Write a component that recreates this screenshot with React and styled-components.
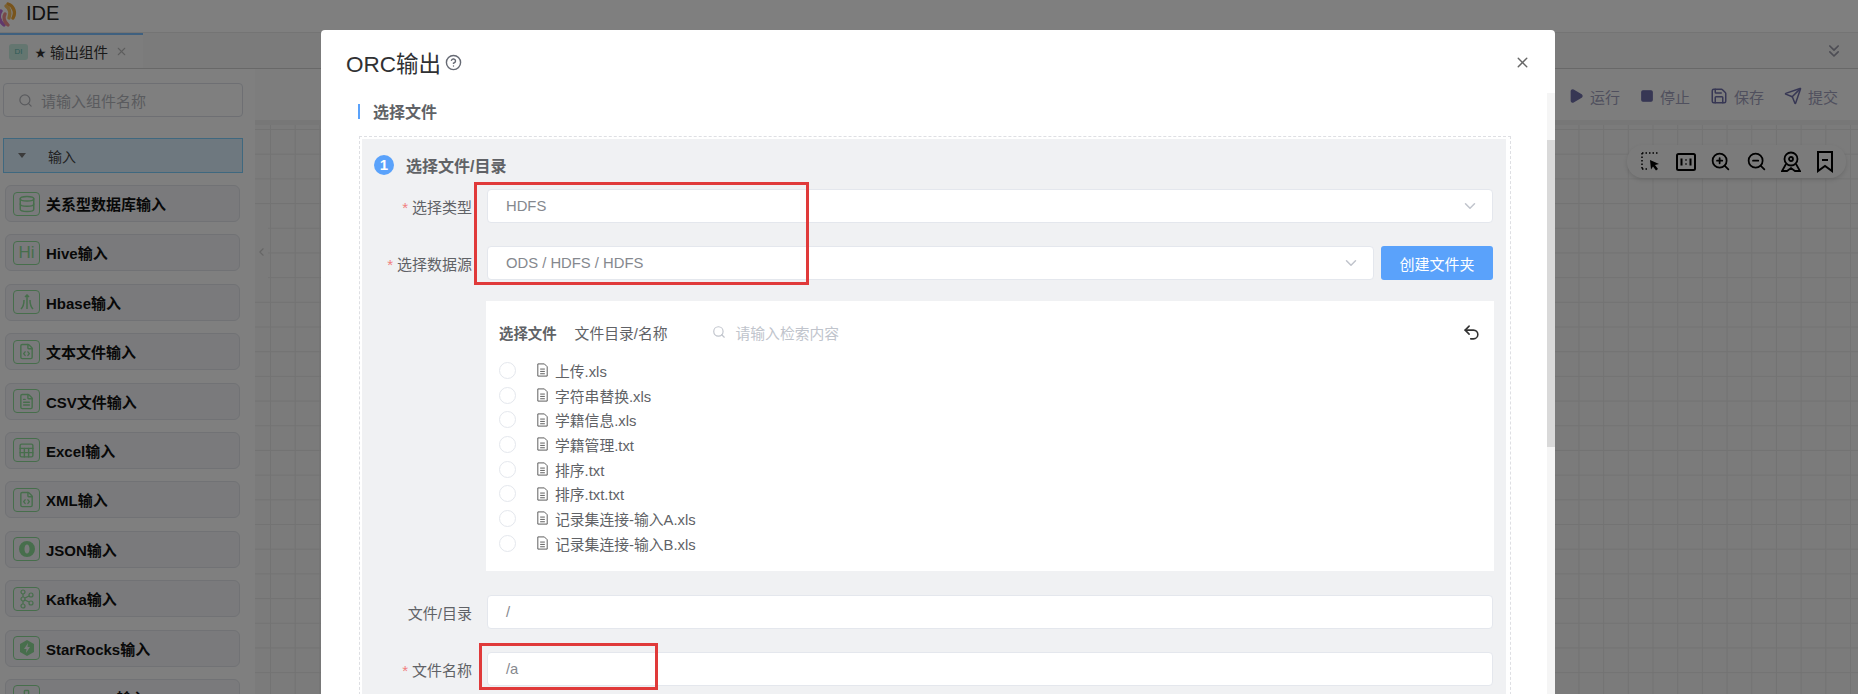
import React from "react";
import styled, { createGlobalStyle } from "styled-components";
import { Search, X, ChevronDown, ChevronLeft, ChevronsDown, FileText, Undo2, CircleHelp, Play, Square, Save, Send, ZoomIn, ZoomOut, Database, Network, FileCode, Sheet } from "lucide-react";

const Global = createGlobalStyle`
  html, body { margin: 0; padding: 0; overflow: hidden; }
  body { font-family: "Liberation Sans", "Noto Sans CJK SC", sans-serif; }
  * { box-sizing: border-box; }
`;

const Page = styled.div`
  position: relative;
  width: 1858px;
  height: 694px;
  overflow: hidden;
  background: #fff;
  display: flex;
  flex-direction: column;
`;

const TopBar = styled.header`
  height: 33px;
  flex: none;
  display: flex;
  align-items: center;
  gap: 9px;
  padding-bottom: 5px;
  font-size: 20px;
  color: #222;
  border-bottom: 1px solid #e8e8e8;
  svg { margin: 3px 0 0 -3px; }
`;

const TabBar = styled.div`
  height: 36px;
  flex: none;
  display: flex;
  justify-content: space-between;
  align-items: center;
  background: #f7f7f7;
  border-bottom: 1px solid #d0d0d0;
  padding-right: 14px;
  color: #9a9aa8;
`;

const Tab = styled.div`
  width: 143px;
  height: 100%;
  display: flex;
  align-items: center;
  padding-left: 9px;
  font-size: 14.5px;
  color: #333;
  border-top: 2px solid #7ec0ff;
  background: #fafafa;
  svg { color: #bbb; margin-left: 7px; }
`;

const TabBadge = styled.span`
  width: 19px;
  height: 16px;
  border-radius: 3px;
  background: #c8ece0;
  color: #60b8b0;
  font-size: 8px;
  line-height: 16px;
  text-align: center;
  margin-right: 7px;
`;

const Star = styled.span`
  font-size: 11px;
  margin-right: 4px;
`;

const Main = styled.div`
  flex: 1;
  min-height: 0;
  display: flex;
`;

const Sidebar = styled.aside`
  width: 255px;
  flex: none;
  padding: 14px 12px 0 3px;
  overflow: hidden;
`;

const SideSearch = styled.div`
  height: 34px;
  display: flex;
  align-items: center;
  gap: 8px;
  padding-left: 14px;
  border: 1px solid #dcdfe6;
  border-radius: 4px;
  font-size: 15px;
  color: #b4b6bc;
`;

const Group = styled.div`
  height: 35px;
  margin: 21px 0 12px;
  display: flex;
  align-items: center;
  padding-left: 14px;
  gap: 22px;
  font-size: 14px;
  color: #444;
  background: #dcf0ff;
  border: 1px solid #7ed0ff;
`;

const Caret = styled.span`
  width: 0;
  height: 0;
  border-left: 4px solid transparent;
  border-right: 4px solid transparent;
  border-top: 5px solid #777;
`;

const Items = styled.div`
  display: flex;
  flex-direction: column;
  gap: 12.4px;
  margin: 0 3px 0 2px;
`;

const Item = styled.div`
  height: 37px;
  flex: none;
  display: flex;
  align-items: center;
  gap: 6px;
  padding-left: 7px;
  font-size: 15px;
  font-weight: 700;
  color: #111;
  background: #f4f5f8;
  border: 1px solid #e2e4ea;
  border-radius: 6px;
`;

const ItemIcon = styled.span`
  width: 27px;
  height: 24px;
  flex: none;
  display: flex;
  align-items: center;
  justify-content: center;
  border: 1px solid #8edc98;
  border-radius: 4px;
  color: #8edc98;
  font-size: 17px;
  font-weight: 400;
`;

const Workspace = styled.section`
  position: relative;
  flex: 1;
  min-width: 0;
  display: flex;
  flex-direction: column;
`;

const Toolbar = styled.div`
  height: 51px;
  flex: none;
  display: flex;
  align-items: center;
  justify-content: flex-end;
  gap: 20px;
  padding: 3px 20px 0 0;
  background: #fafafa;
`;

const ToolAction = styled.span`
  display: flex;
  align-items: center;
  gap: 6px;
  font-size: 15px;
  color: #a0a0bc;
  svg { color: #6e6ea8; }
`;

const Canvas = styled.div`
  flex: 1;
  background-color: #f6f6f6;
  background-image:
    linear-gradient(#e6e6e6 1px, transparent 1px),
    linear-gradient(90deg, #e6e6e6 1px, transparent 1px);
  background-size: 24.7px 24.7px;
  background-position: 15px 4px;
  border-top: 5px solid #eee;
`;

const CollapseHandle = styled.span`
  position: absolute;
  left: 0;
  top: 148px;
  width: 13px;
  height: 70px;
  display: flex;
  align-items: center;
  color: #ccc;
  background: #f6f6f6;
`;

const CanvasTools = styled.div`
  position: absolute;
  right: 12px;
  top: 76px;
  width: 219px;
  height: 33px;
  display: flex;
  align-items: center;
  justify-content: space-between;
  padding: 0 12px 0 14px;
  border-radius: 16px;
  background: #f7f7f7;
  box-shadow: 0 2px 4px rgba(0, 0, 0, 0.12);
  color: #000;
`;

const Overlay = styled.div`
  position: absolute;
  inset: 0;
  background: rgba(0, 0, 0, 0.5);
`;

const Modal = styled.div`
  position: absolute;
  left: 321px;
  top: 30px;
  width: 1234px;
  height: 720px;
  background: #fff;
  border-radius: 4px;
`;

const ModalHeader = styled.div`
  height: 61px;
  display: flex;
  align-items: center;
  padding: 3px 25px 0;
  font-size: 22.5px;
  color: #303133;
  svg { color: #666a74; margin-left: 4px; }
`;

const CloseButton = styled.span`
  margin-left: auto;
  margin-right: -1px;
  display: flex;
  svg { color: #666; margin: 0; }
`;

const ScrollTrack = styled.div`
  position: absolute;
  right: 0;
  top: 63px;
  bottom: 0;
  width: 8px;
  padding-top: 47px;
  background: #f5f5f5;
`;

const ScrollThumb = styled.div`
  height: 307px;
  background: #d9d9d9;
`;

const ModalBody = styled.div`
  padding: 10px 44px 0 38px;
`;

const SectionTitle = styled.h3`
  height: 20px;
  margin: 0 0 15px -1px;
  display: flex;
  align-items: center;
  gap: 13px;
  font-size: 16px;
  color: #606266;
  &::before {
    content: "";
    width: 2px;
    height: 15px;
    background: #5aa2fb;
  }
`;

const DashedBox = styled.div`
  border: 1px dashed #dedfe3;
  padding: 2px 4px 0 2px;
`;

const StepPanel = styled.div`
  background: #f0f1f3;
  padding: 16px 13px 20px 0;
`;

const StepTitle = styled.div`
  height: 20px;
  margin: 0 0 14px 12px;
  display: flex;
  align-items: center;
  gap: 12px;
  font-size: 16px;
  font-weight: 700;
  color: #606266;
`;

const StepNumber = styled.span`
  width: 20px;
  height: 20px;
  border-radius: 50%;
  background: #5aa2fb;
  color: #fff;
  font-size: 15px;
  line-height: 20px;
  text-align: center;
`;

const FormRow = styled.div`
  display: flex;
  align-items: center;
  margin-bottom: ${(p) => p.$gap ?? 23}px;
`;

const Label = styled.label`
  width: 110px;
  flex: none;
  margin-right: 15px;
  text-align: right;
  font-size: 15px;
  color: #606266;
  ${(p) => p.$required && `&::before { content: "*"; color: #f08080; margin-right: 4px; }`}
`;

const Field = styled.div`
  flex: 1;
  min-width: 0;
  height: 34px;
  display: flex;
  align-items: center;
  justify-content: space-between;
  padding: 0 13px 0 18px;
  background: #fff;
  border: 1px solid #e4e7ed;
  border-radius: 4px;
  font-size: 14.8px;
  color: #85888e;
  svg { color: #c0c4cc; }
`;

const PrimaryButton = styled.button`
  width: 112px;
  height: 34px;
  flex: none;
  margin-left: 7px;
  border: 0;
  border-radius: 3px;
  background: #5aa2fb;
  color: #fff;
  font: inherit;
  font-size: 15px;
`;

const FilePanel = styled.div`
  height: 270px;
  margin: 0 -1px 24px 124px;
  padding: 21px 10px 0 13px;
  background: #fff;
`;

const FileHead = styled.div`
  height: 20px;
  margin-bottom: 16px;
  display: flex;
  align-items: center;
  font-size: 14.8px;
  color: #606266;
`;

const FileHeadTitle = styled.b`
  font-size: 14.4px;
  margin-right: 18px;
`;

const FileSearch = styled.span`
  margin-left: 45px;
  display: flex;
  align-items: center;
  gap: 9px;
  color: #c0c4cc;
`;

const BackIcon = styled.span`
  margin-left: auto;
  margin-right: 3px;
  display: flex;
  color: #333;
`;

const FileRow = styled.div`
  height: 24.7px;
  display: flex;
  align-items: center;
  font-size: 14.8px;
  color: #606266;
  svg { margin: 0 5px 0 19px; color: #555; }
`;

const Radio = styled.span`
  width: 17px;
  height: 17px;
  flex: none;
  border: 1px solid #e4e7ed;
  border-radius: 50%;
`;

const RedMark = styled.div`
  position: absolute;
  left: ${(p) => p.$x}px;
  top: ${(p) => p.$y}px;
  width: ${(p) => p.$w}px;
  height: ${(p) => p.$h}px;
  border: 3px solid #e03a3a;
`;

const Logo = () => (
  <svg width="20" height="26" viewBox="0 0 20 26" fill="none" strokeWidth="3.4" strokeLinecap="round">
    <path d="M11 2c6 2 8 9 5 14" stroke="#f0a838" />
    <path d="M9 4c3 2 5 6 3 12" stroke="#f7c060" />
    <path d="M4 9c-3 4-2 10 3 14" stroke="#c070d8" />
    <path d="M8 12c-2 3-1 8 3 11" stroke="#f09090" />
  </svg>
);

const Doc = ({ children }) => (
  <svg width="15" height="16" viewBox="0 0 16 16" fill="none" stroke="currentColor" strokeWidth="1">
    <path d="M3 1.500h7l3 3v10H3z" />
    {children}
  </svg>
);

const SelectTool = () => (
  <svg width="20" height="20" viewBox="0 0 20 20" fill="none">
    <path d="M1 1h16M1 1v16M1 17h5" stroke="#000" strokeWidth="1.500" strokeDasharray="1.500 2" />
    <path d="M9 8l9 4-4 1 3 4-2 1.500-3-4-2 3z" fill="#000" />
  </svg>
);

const RatioTool = () => (
  <svg width="20" height="18" viewBox="0 0 20 18" fill="none" stroke="#000" strokeWidth="2">
    <rect x="1" y="1" width="18" height="16" rx="1.500" />
    <path d="M5.500 5.500v7M14.500 5.500v7M10 6.500v1M10 10.500v1" />
  </svg>
);

const BadgeTool = () => (
  <svg width="20" height="22" viewBox="0 0 20 22" fill="none" stroke="#000" strokeWidth="1.800">
    <circle cx="10" cy="8" r="6.500" />
    <circle cx="10" cy="8" r="2" />
    <path d="M5 13l-4 7h5l4-3 4 3h5l-4-7" />
  </svg>
);

const BookmarkTool = () => (
  <svg width="18" height="22" viewBox="0 0 18 22" fill="none" stroke="#000" strokeWidth="2">
    <path d="M2 1h14v19l-7-5-7 5zM6 9h6" />
  </svg>
);

const JsonIcon = () => (
  <svg width="18" height="18" viewBox="0 0 18 18">
    <path fillRule="evenodd" d="M9 1a8 8 0 1 1 0 16A8 8 0 0 1 9 1zm0 3.500c-1.500 0-2.500 2-2.500 4.500s1 4.500 2.500 4.500 2.500-2 2.500-4.500-1-4.500-2.500-4.500z" fill="currentColor" />
  </svg>
);

const StarRocksIcon = () => (
  <svg width="18" height="18" viewBox="0 0 18 18">
    <path fillRule="evenodd" d="M9 1l7 4v8l-7 4-7-4V5zm1 3L6 10h2.500L8 14l4-6H9.500z" fill="currentColor" />
  </svg>
);

const KafkaIcon = () => (
  <svg width="16" height="20" viewBox="0 0 16 20" fill="none" stroke="currentColor" strokeWidth="1.200">
    <circle cx="4" cy="3" r="2" /><circle cx="4" cy="17" r="2" /><circle cx="4" cy="10" r="2" />
    <circle cx="12" cy="6" r="2" /><circle cx="12" cy="14" r="2" />
    <path d="M4 5v3M4 12v3M6 9l4-2M6 11l4 2" />
  </svg>
);

const HbaseIcon = () => (
  <svg width="18" height="16" viewBox="0 0 18 16" fill="none" stroke="currentColor" strokeWidth="1.500">
    <path d="M9 1v14M6 6c0 5-1 7-3 9M12 6c0 5 1 7 3 9M7 3l2-2 2 2" />
  </svg>
);

const sideItems = [
  { name: "关系型数据库输入", icon: <Database size={18} /> },
  { name: "Hive输入", icon: "Hi" },
  { name: "Hbase输入", icon: <HbaseIcon /> },
  { name: "文本文件输入", icon: <FileCode size={17} /> },
  { name: "CSV文件输入", icon: <FileText size={17} /> },
  { name: "Excel输入", icon: <Sheet size={17} /> },
  { name: "XML输入", icon: <FileCode size={17} /> },
  { name: "JSON输入", icon: <JsonIcon /> },
  { name: "Kafka输入", icon: <KafkaIcon /> },
  { name: "StarRocks输入", icon: <StarRocksIcon /> },
  { name: "MongoDB输入", icon: <Network size={17} /> },
];

const files = [
  "上传.xls",
  "字符串替换.xls",
  "学籍信息.xls",
  "学籍管理.txt",
  "排序.txt",
  "排序.txt.txt",
  "记录集连接-输入A.xls",
  "记录集连接-输入B.xls",
];

export default function App() {
  return (
    <Page>
      <Global />
      <TopBar>
        <Logo />
        IDE
      </TopBar>
      <TabBar>
        <Tab>
          <TabBadge>DI</TabBadge>
          <Star>★</Star>
          输出组件
          <X size={13} />
        </Tab>
        <ChevronsDown size={20} />
      </TabBar>
      <Main>
        <Sidebar>
          <SideSearch>
            <Search size={15} />
            请输入组件名称
          </SideSearch>
          <Group>
            <Caret />
            输入
          </Group>
          <Items>
            {sideItems.map((item) => (
              <Item key={item.name}>
                <ItemIcon>{item.icon}</ItemIcon>
                {item.name}
              </Item>
            ))}
          </Items>
        </Sidebar>
        <Workspace>
          <Toolbar>
            <ToolAction><Play size={16} fill="currentColor" />运行</ToolAction>
            <ToolAction><Square size={14} fill="currentColor" />停止</ToolAction>
            <ToolAction><Save size={18} />保存</ToolAction>
            <ToolAction><Send size={18} />提交</ToolAction>
          </Toolbar>
          <Canvas />
          <CollapseHandle><ChevronLeft size={14} /></CollapseHandle>
          <CanvasTools>
            <SelectTool />
            <RatioTool />
            <ZoomIn size={21} strokeWidth={2} />
            <ZoomOut size={21} strokeWidth={2} />
            <BadgeTool />
            <BookmarkTool />
          </CanvasTools>
        </Workspace>
      </Main>
      <Overlay />
      <Modal>
        <ModalHeader>
          ORC输出
          <CircleHelp size={17} />
          <CloseButton><X size={17} /></CloseButton>
        </ModalHeader>
        <ScrollTrack><ScrollThumb /></ScrollTrack>
        <ModalBody>
          <SectionTitle>选择文件</SectionTitle>
          <DashedBox>
            <StepPanel>
              <StepTitle>
                <StepNumber>1</StepNumber>
                选择文件/目录
              </StepTitle>
              <FormRow>
                <Label $required>选择类型</Label>
                <Field>HDFS<ChevronDown size={18} /></Field>
              </FormRow>
              <FormRow $gap={21}>
                <Label $required>选择数据源</Label>
                <Field>ODS / HDFS / HDFS<ChevronDown size={18} /></Field>
                <PrimaryButton>创建文件夹</PrimaryButton>
              </FormRow>
              <FilePanel>
                <FileHead>
                  <FileHeadTitle>选择文件</FileHeadTitle>
                  文件目录/名称
                  <FileSearch>
                    <Search size={14} />
                    请输入检索内容
                  </FileSearch>
                  <BackIcon><Undo2 size={19} /></BackIcon>
                </FileHead>
                {files.map((file) => (
                  <FileRow key={file}>
                    <Radio />
                    <Doc><path d="M5.500 7h5M5.500 9.500h5M5.500 12h5" /></Doc>
                    {file}
                  </FileRow>
                ))}
              </FilePanel>
              <FormRow>
                <Label>文件/目录</Label>
                <Field>/</Field>
              </FormRow>
              <FormRow>
                <Label $required>文件名称</Label>
                <Field>/a</Field>
              </FormRow>
            </StepPanel>
          </DashedBox>
        </ModalBody>
      </Modal>
      <RedMark $x={474} $y={182} $w={335} $h={103} />
      <RedMark $x={479} $y={643} $w={179} $h={47} />
    </Page>
  );
}
